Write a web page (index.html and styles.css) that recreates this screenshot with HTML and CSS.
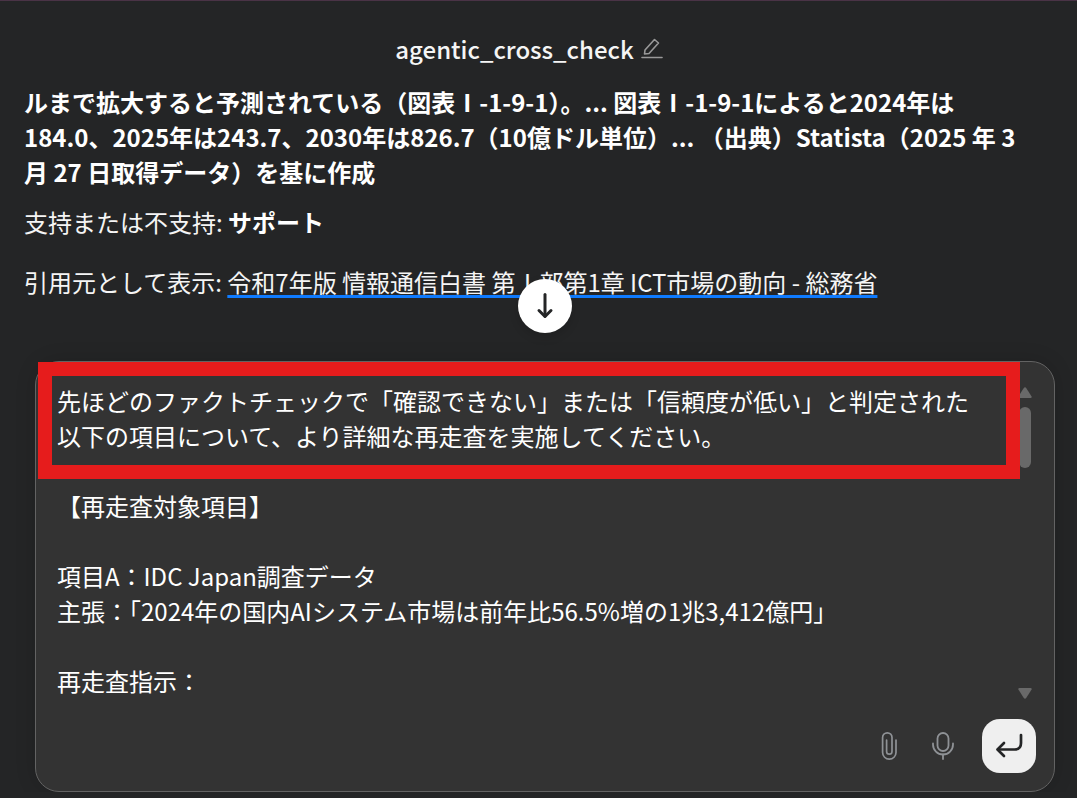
FILE: index.html
```html
<!DOCTYPE html>
<html lang="ja">
<head>
    <meta charset="UTF-8">
    <meta name="viewport" content="width=device-width, initial-scale=1.0">
    <title>agentic_cross_check</title>
    <link rel="stylesheet" href="styles.css">
</head>
<body>

    <header class="chat-header">
        <h1 class="chat-title">agentic_cross_check</h1>
        <button class="icon-btn" type="button" aria-label="名前を編集">
            <svg width="24" height="24" viewBox="0 0 24 24" fill="none" stroke="#999" stroke-width="1.6" stroke-linejoin="round" stroke-linecap="round">
                <path d="M4.500 17 L5 13 L14.500 2.500 L18.500 6 L9 16.500 Z"/>
                <path d="M2 20.500 H22"/>
            </svg>
        </button>
    </header>

    <main class="message">
        <p class="quote"><strong>ルまで拡大すると予測されている（図表Ⅰ-1-9-1）。... 図表Ⅰ-1-9-1によると2024年は184.0、2025年は243.7、2030年は826.7（10億ドル単位）... （出典）Statista（2025 年 3 月 27 日取得データ）を基に作成</strong></p>
        <p class="verdict">支持または不支持: <strong>サポート</strong></p>
        <p class="source">引用元として表示: <a class="source-link" href="#">令和7年版 情報通信白書 第Ⅰ部第1章 ICT市場の動向 - 総務省</a></p>
        <button class="scroll-down" type="button" aria-label="一番下へ">
            <svg width="26" height="30" viewBox="0 0 26 30" fill="none" stroke="#242526" stroke-width="3" stroke-linecap="round" stroke-linejoin="round">
                <path d="M13 3.500 V25"/>
                <path d="M7 19.500 L13 25.500 L19 19.500"/>
            </svg>
        </button>
    </main>

    <form class="composer">
        <div class="editor">
            <textarea class="prompt" aria-label="メッセージ">先ほどのファクトチェックで「確認できない」または「信頼度が低い」と判定された以下の項目について、より詳細な再走査を実施してください。

【再走査対象項目】

項目A：IDC Japan調査データ
主張：「2024年の国内AIシステム市場は前年比56.5%増の1兆3,412億円」

再走査指示：</textarea>
            <div class="scrollbar">
                <svg width="14" height="12" viewBox="0 0 14 12" fill="#696969"><path d="M5.800 1 Q7 -0.500 8.200 1 L13.600 9.500 Q14 11 12.600 11 H1.400 Q0 11 0.400 9.500 Z"/></svg>
                <span class="thumb"></span>
                <svg width="14" height="12" viewBox="0 0 14 12" fill="#696969"><path d="M5.800 11 Q7 12.500 8.200 11 L13.600 2.500 Q14 1 12.600 1 H1.400 Q0 1 0.400 2.500 Z"/></svg>
            </div>
        </div>
        <div class="actions">
            <button class="icon-btn" type="button" aria-label="ファイルを添付">
                <svg width="24" height="32" viewBox="0 0 24 32" fill="none" stroke="#8f9296" stroke-width="1.700" stroke-linecap="round">
                    <path d="M19 10 V22.500 A6.700 6.700 0 0 1 5.600 22.500 V7.500 A4.700 4.700 0 0 1 15 7.500 V21.500 A2.700 2.700 0 0 1 9.600 21.500 V10"/>
                </svg>
            </button>
            <button class="icon-btn" type="button" aria-label="音声入力">
                <svg width="24" height="32" viewBox="0 0 24 32" fill="none" stroke="#8f9296" stroke-width="1.800" stroke-linecap="round">
                    <rect x="6.500" y="3" width="11" height="18" rx="5.500"/>
                    <path d="M2 13.500 V14.500 A10 10 0 0 0 22 14.500 V13.500"/>
                    <path d="M12 24.500 V29"/>
                </svg>
            </button>
            <button class="send" type="submit" aria-label="送信">
                <svg width="28" height="28" viewBox="0 0 28 28" fill="none" stroke="#242526" stroke-width="2.700" stroke-linecap="round" stroke-linejoin="round">
                    <path d="M26 3 V11 Q26 17.500 19.500 17.500 H3"/>
                    <path d="M9 11 L2.500 17.500 L9 24"/>
                </svg>
            </button>
        </div>
        <div class="highlight"></div>
    </form>

</body>
</html>
```
FILE: styles.css
```css
* {
    box-sizing: border-box;
}

body {
    margin: 0;
    border-top: 1px solid #4a3346;
    background-color: #242526;
    color: #f5f5f5;
    font-family: "Noto Sans CJK JP", sans-serif;
    font-size: 24px;
    line-height: 35px;
    overflow: hidden;
}

button {
    display: flex;
    align-items: center;
    justify-content: center;
    padding: 0;
    border: none;
    background: none;
    cursor: pointer;
}

.chat-header {
    display: flex;
    align-items: center;
    justify-content: center;
    gap: 6px;
    padding: 30px 18px 0 0;
}

.chat-title {
    margin: 0;
    font-size: 24px;
    font-weight: 500;
}

/* message */
.message {
    position: relative;
    padding: 18px 50px 0 24px;
}

.message p {
    margin: 0;
}

.message strong {
    color: #fff;
    font-weight: 700;
}

.message .verdict {
    margin-top: 15px;
}

.message .source {
    margin-top: 25px;
}

.source-link {
    color: inherit;
    text-decoration: underline 3px #0f7bff;
    text-decoration-skip-ink: none;
    text-underline-offset: 3px;
}

.scroll-down {
    position: absolute;
    left: 518px;
    bottom: -34px;
    width: 54px;
    height: 54px;
    border-radius: 50%;
    background-color: #fff;
    box-shadow: 0 4px 10px rgba(0, 0, 0, 0.15);
}

/* composer */
.composer {
    position: relative;
    margin: 62px 22px 0 35px;
    padding: 21px 17px 18px 21px;
    border: 1px solid #636363;
    border-radius: 24px;
    background-color: #333;
    box-shadow: 0 0 20px rgba(0, 0, 0, 0.15);
}

.editor {
    display: flex;
    height: 318px;
}

.prompt {
    flex: 1;
    padding: 0 30px 0 0;
    border: none;
    outline: none;
    resize: none;
    overflow: hidden;
    background: none;
    color: #fff;
    font: inherit;
}

.scrollbar {
    display: flex;
    flex-direction: column;
    align-items: center;
    width: 24px;
    padding: 4px 0 2px;
}

.thumb {
    width: 12px;
    height: 61px;
    margin: 8px 0 auto;
    border-radius: 6px;
    background-color: #696969;
}

.actions {
    display: flex;
    align-items: center;
    justify-content: flex-end;
    gap: 30px;
    margin: 18px 1px 0 0;
}

.send {
    width: 54px;
    height: 54px;
    margin-left: -3px;
    border-radius: 18px;
    background-color: #efefef;
}

/* red frame around the instruction */
.highlight {
    position: absolute;
    top: 0;
    left: 2px;
    right: 34px;
    height: 117px;
    border: 14px solid #e61c1c;
    pointer-events: none;
}
```
